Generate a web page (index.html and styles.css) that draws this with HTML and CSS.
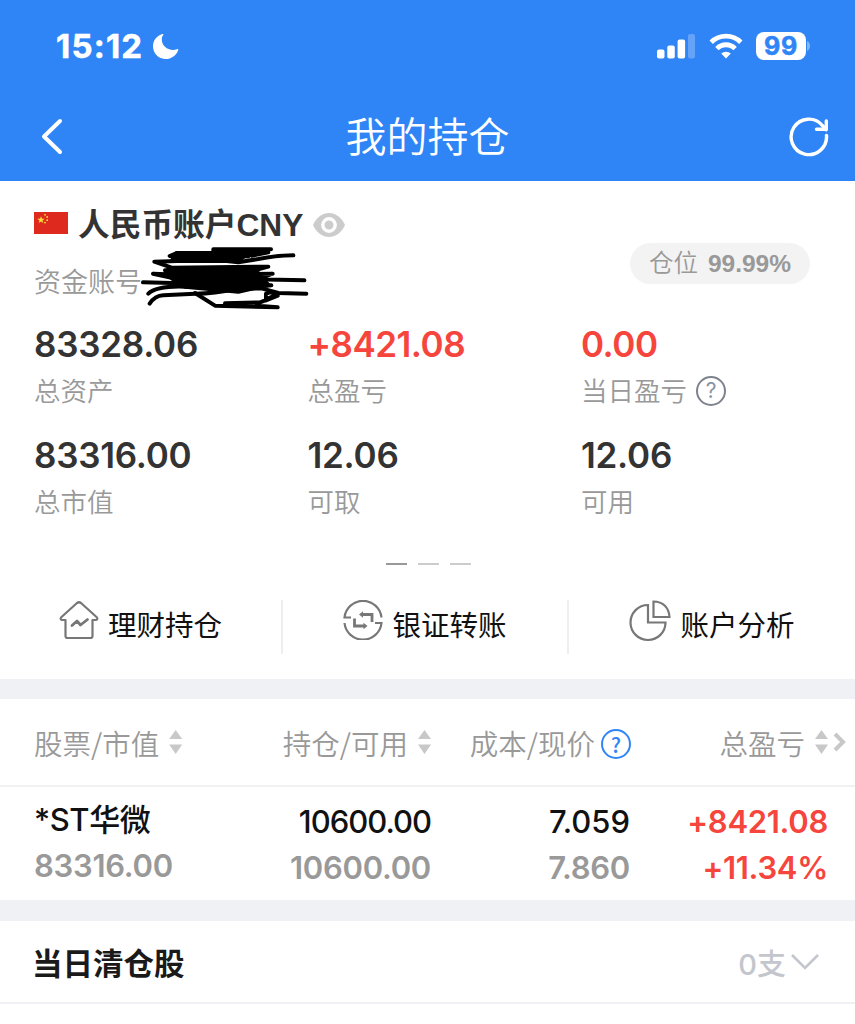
FILE: index.html
```
<!DOCTYPE html>
<html lang="zh-CN">
<head>
    <meta charset="UTF-8">
    <meta name="viewport" content="width=device-width, initial-scale=1.0">
    <title>我的持仓</title>
    <link rel="stylesheet" href="styles.css">
</head>
<body>

    <!-- Header -->
    <header>
        <div class="status-bar">
            <span class="time">15:12</span>
            <svg class="moon" width="27" height="27" viewBox="0 0 27 27"><path d="M10.500 1C5 2.500 1 7.200 1 13.200C1 20.400 6.600 26 13.800 26C19.500 26 24.500 22.300 26.200 17.200C26.500 16.300 25.800 15.900 25 16.200C18 18.800 9.200 14 9.800 5.500C9.900 4.200 10.600 2.900 11.200 2C11.600 1.300 11.300 0.800 10.500 1Z" fill="#fff"/></svg>
            <svg class="signal" width="39" height="25" viewBox="0 0 39 25" fill="#fff">
                <rect x="0" y="15.500" width="7.500" height="9" rx="2"/>
                <rect x="10.300" y="11.500" width="7.500" height="13" rx="2"/>
                <rect x="20.600" y="5.500" width="7.500" height="19" rx="2"/>
                <rect x="31" y="0" width="7" height="24.500" rx="2" opacity="0.25"/>
            </svg>
            <svg class="wifi" width="34" height="26" viewBox="0 0 34 26" fill="none" stroke="#fff" stroke-width="4.800">
                <path d="M2.200 9.200A21 21 0 0 1 31.800 9.200"/>
                <path d="M7.900 15.600A12.700 12.700 0 0 1 26.100 15.600"/>
                <path d="M17 25.500L12.200 20.600A7 7 0 0 1 21.800 20.600Z" fill="#fff" stroke="none"/>
            </svg>
            <span class="battery">99</span>
            <svg class="battery-tip" width="4" height="10" viewBox="0 0 4 10"><path d="M0 0C4 1.500 4 8.500 0 10Z" fill="#fff" opacity="0.4"/></svg>
        </div>
        <nav>
            <svg width="24" height="38" viewBox="0 0 24 38" fill="none" stroke="#fff" stroke-width="4" stroke-linecap="round" stroke-linejoin="round"><path d="M20 3L4 18.500L20 34"/></svg>
            <h1>我的持仓</h1>
            <svg width="42" height="42" viewBox="0 0 42 42" fill="none" stroke="#fff" stroke-width="3.400" stroke-linecap="round" stroke-linejoin="round">
                <path d="M38.500 19.500A17.700 17.700 0 1 1 34.500 9.600L38 13.700"/>
                <path d="M38.300 5V13.200H28.500"/>
            </svg>
        </nav>
    </header>

    <main>
        <!-- Account summary -->
        <section class="account">
            <div class="account-top">
                <div>
                    <div class="account-name">
                        <svg class="flag" width="34" height="22" viewBox="0 0 34 22">
                            <rect width="34" height="22" fill="#de2a1e"/>
                            <g fill="#fbe03a"><path d="M7 4.200L8 6.800H10.700L8.500 8.400L9.300 11L7 9.400L4.700 11L5.500 8.400L3.300 6.800H6Z"/><circle cx="11" cy="2.800" r="0.900"/><circle cx="13.200" cy="5" r="0.900"/><circle cx="13.200" cy="8.200" r="0.900"/><circle cx="11" cy="10.600" r="0.900"/></g>
                        </svg>
                        <h2>人民币账户CNY</h2>
                        <svg width="32" height="24" viewBox="0 0 32 24">
                            <path d="M0 12C7-4 25-4 32 12C25 28 7 28 0 12Z" fill="#ccc"/>
                            <circle cx="16" cy="12" r="6.200" fill="none" stroke="#fff" stroke-width="3.400"/>
                        </svg>
                    </div>
                    <div class="account-number">
                        资金账号
                        <svg class="scribble" width="170" height="66.700" viewBox="15 20 510 200" fill="none" stroke="#000" stroke-width="12" stroke-linecap="round" stroke-linejoin="round">
                            <path d="M408 33H235V42L355 38L400 42L350 52L370 44L125 44L104 53L140 56L340 54"/>
                            <path d="M475 51Q420 52 370 62L310 72L240 64L58 70L110 88L400 85L350 98L90 96L110 110L413 106L380 118L54 106L110 118L508 126"/>
                            <path d="M24 132L110 134L409 141L340 148L150 145Q65 142 40 166"/>
                            <path d="M44 196Q60 172 85 171L180 166Q240 166 300 152L380 150L430 164L514 166"/>
                            <path d="M180 164L240 202L428 207L270 195L375 192L428 172L393 186V166L405 162L428 168L400 180"/>
                            <path d="M125 44H340L310 68H110ZM100 92H340L370 104L400 140L310 160L150 145L110 120Z" fill="#000"/>
                        </svg>
                    </div>
                </div>
                <span class="position-pill">仓位 <b>99.99%</b></span>
            </div>

            <div class="stats">
                <div><p class="value">83328.06</p><p class="label">总资产</p></div>
                <div><p class="value red">+8421.08</p><p class="label">总盈亏</p></div>
                <div><p class="value red">0.00</p><p class="label">当日盈亏 <span class="help">?</span></p></div>
                <div><p class="value">83316.00</p><p class="label">总市值</p></div>
                <div><p class="value">12.06</p><p class="label">可取</p></div>
                <div><p class="value">12.06</p><p class="label">可用</p></div>
            </div>

            <div class="pager"><i class="active"></i><i></i><i></i></div>
        </section>

        <!-- Shortcuts -->
        <section class="actions">
            <a>
                <svg width="40" height="40" viewBox="0 0 40 40" fill="none" stroke="#777" stroke-width="2.200" stroke-linejoin="round" stroke-linecap="round">
                    <path d="M6.500 20H3Q0.500 19 2.500 17L18 3Q20 1.500 22 3L37.500 17Q39.500 19 37 20H33.500V36Q33.500 38 31.500 38H8.500Q6.500 38 6.500 36Z"/>
                    <path d="M13 25.500L18 21L21.500 25L28.500 19.500" stroke-width="2.800"/>
                </svg>
                理财持仓
            </a>
            <a>
                <svg width="40" height="40" viewBox="0 0 40 40" fill="none" stroke="#777" stroke-width="2.200">
                    <path d="M8 17.500H1.500A18.600 18.600 0 0 1 38.500 17.500"/>
                    <path d="M32 23H38.500A18.600 18.600 0 0 1 1.500 23"/>
                    <path d="M11.500 18.500V26H21M29 22V14.500H19" stroke-width="2.800"/>
                    <path d="M20.500 22.800V29.200L24.500 26ZM20 11.300V17.700L16 14.500Z" fill="#777" stroke="none"/>
                </svg>
                银证转账
            </a>
            <a>
                <svg width="42" height="42" viewBox="0 0 42 42" fill="none" stroke="#777" stroke-width="2.200">
                    <path d="M19 5A17.500 17.500 0 1 0 36.500 22.500H19Z"/>
                    <path d="M24.500 1.500V17H40.500C40 7.500 34 1.500 24.500 1.500Z"/>
                </svg>
                账户分析
            </a>
        </section>

        <!-- Holdings -->
        <section class="holdings">
            <div class="row head">
                <span>股票/市值<i class="sort"></i></span>
                <span>持仓/可用<i class="sort"></i></span>
                <span>成本/现价<span class="help blue">?</span></span>
                <span class="last">总盈亏<i class="sort"></i><svg width="13" height="20" viewBox="0 0 13 20" fill="none" stroke="#c8c8c8" stroke-width="4"><path d="M2 2L10 10L2 18"/></svg></span>
            </div>
            <div class="row item">
                <div class="stock"><p>*ST华微</p><p class="sub">83316.00</p></div>
                <div class="amount"><p>10600.00</p><p class="sub">10600.00</p></div>
                <div><p>7.059</p><p class="sub">7.860</p></div>
                <div class="profit"><p>+8421.08</p><p>+11.34%</p></div>
            </div>
        </section>

        <!-- Closed today -->
        <section class="closed">
            <h3>当日清仓股</h3>
            <span>0支</span>
            <svg width="30" height="18" viewBox="0 0 30 18" fill="none" stroke="#c3c6cd" stroke-width="2.600"><path d="M2 2L15 15L28 2"/></svg>
        </section>
    </main>

</body>
</html>
```
FILE: styles.css
```
/* Basic Reset */
* {
    margin: 0;
    padding: 0;
    box-sizing: border-box;
}

body {
    font-family: Inter, "Noto Sans CJK SC", sans-serif;
    background-color: #fff;
    color: #333;
}

svg {
    display: block;
    flex-shrink: 0;
}

/* Header */
header {
    height: 181px;
    background-color: #3085f6;
    color: #fff;
}

.status-bar {
    display: flex;
    align-items: center;
    height: 92px;
    padding: 0 44px 0 56px;
}

.time {
    font-size: 33px;
    font-weight: 700;
    letter-spacing: 1.2px;
    -webkit-text-stroke: 0.5px #fff;
}

.moon {
    margin-left: 9px;
}

.signal {
    margin-left: auto;
}

.wifi {
    margin-left: 13px;
}

.battery {
    width: 50px;
    height: 28px;
    margin-left: 13px;
    border-radius: 8px;
    background-color: #fff;
    color: #3085f6;
    font-size: 25px;
    font-weight: 700;
    line-height: 29px;
    letter-spacing: 0.8px;
    text-align: center;
    -webkit-text-stroke: 0.6px #3085f6;
}

.battery-tip {
    margin-left: 1px;
}

nav {
    display: flex;
    align-items: center;
    justify-content: space-between;
    height: 89px;
    padding: 0 25px 0 40px;
}

nav h1 {
    font-size: 41px;
    font-weight: 350;
    line-height: 60px;
    margin-left: 3px;
}

/* Account Summary */
.account {
    height: 419px;
    padding: 22px 0 0 34px;
}

.account-top {
    display: flex;
    justify-content: space-between;
    height: 121px;
    padding-right: 45px;
}

.account-name {
    display: flex;
    align-items: center;
    height: 44px;
}

.flag {
    margin-top: -4px;
}

.account-name h2 {
    margin: 0 10px;
    font-family: "Liberation Sans", "Noto Sans CJK SC", sans-serif;
    font-size: 31.7px;
    font-weight: 600;
    line-height: 46px;
}

.account-number {
    position: relative;
    color: #999;
    font-size: 27px;
    font-weight: 350;
    line-height: 71px;
}

.scribble {
    position: absolute;
    left: 106px;
    top: -2px;
}

.position-pill {
    height: 41px;
    margin-top: 40px;
    padding: 0 19px;
    border-radius: 21px;
    background-color: #f3f3f3;
    color: #999;
    font-family: "Liberation Sans", "Noto Sans CJK SC", sans-serif;
    font-size: 24.5px;
    font-weight: 350;
    line-height: 42px;
}

.position-pill b {
    margin-left: 3px;
    font-weight: 700;
}

.stats {
    display: grid;
    grid-template-columns: repeat(3, 273.5px);
    row-gap: 19px;
}

.value {
    font-size: 35px;
    font-weight: 600;
    line-height: 41px;
    letter-spacing: -0.25px;
}

.red {
    color: #f5453d;
    letter-spacing: -0.5px;
}

.label {
    display: flex;
    align-items: center;
    height: 50px;
    padding-bottom: 2px;
    margin-bottom: 1px;
    color: #999;
    font-size: 26.5px;
    font-weight: 350;
}

.help {
    width: 30px;
    height: 30px;
    margin: 4px 0 0 9px;
    border: 2px solid #7d828c;
    border-radius: 50%;
    color: #8a93a3;
    font-size: 21px;
    font-weight: 400;
    line-height: 26px;
    text-align: center;
}

.pager {
    display: flex;
    gap: 11px;
    margin: 36px 0 0 352px;
}

.pager i {
    width: 21px;
    height: 2px;
    background-color: #ccc;
}

.pager .active {
    background-color: #999;
}

/* Shortcuts */
.actions {
    display: grid;
    grid-template-columns: 283px 286px 286px;
    height: 99px;
    border-bottom: 20px solid #f0f1f4;
}

.actions a {
    display: flex;
    justify-content: center;
    gap: 9px;
    height: 54px;
    border-right: 2px solid #eee;
    color: #111;
    font-size: 28.5px;
    line-height: 51px;
}

.actions a:last-child {
    border-right: none;
}

/* Holdings Table */
.holdings {
    border-bottom: 21px solid #f0f1f4;
}

.row {
    display: grid;
    grid-template-columns: 200px 197px 199px 198px;
    padding-left: 34px;
    text-align: right;
}

.head {
    height: 88px;
    border-bottom: 2px solid #f0f1f3;
    color: #999;
    font-family: "Noto Sans CJK SC", sans-serif;
    font-size: 28.5px;
    font-weight: 350;
}

.head > span {
    display: flex;
    align-items: center;
    justify-content: flex-end;
}

.head > span:first-child {
    justify-content: flex-start;
}

.head .last {
    margin-right: -18px;
}

.sort {
    width: 13px;
    height: 24px;
    margin-left: 10px;
    background-color: #c8c8c8;
    clip-path: polygon(50% 0, 100% 38%, 0 38%, 0 60%, 100% 60%, 50% 100%, 0 60%, 0 38%);
}

.last svg {
    margin-left: 5px;
}

.help.blue {
    margin: 3px -1px 0 6px;
    border-color: #3085f6;
    color: #3085f6;
    font-weight: 500;
}

.item {
    height: 113px;
    padding-top: 12px;
    color: #111;
    font-size: 31px;
    font-weight: 500;
    line-height: 46px;
}

.stock {
    margin-top: -2px;
    text-align: left;
}

.stock p:first-child {
    letter-spacing: -0.4px;
}

.sub {
    color: #999;
    font-weight: 600;
    letter-spacing: -0.3px;
}

.amount p:first-child {
    letter-spacing: -1px;
}

.profit {
    color: #f5453d;
    font-weight: 600;
    letter-spacing: -0.3px;
}

/* Closed Today */
.closed {
    display: flex;
    align-items: center;
    height: 83px;
    padding: 0 35px 0 32px;
    border-bottom: 2px solid #f0f1f4;
}

.closed h3 {
    color: #1a1a1a;
    font-size: 30.5px;
    font-weight: 700;
}

.closed span {
    margin: 0 4px 0 auto;
    color: #c3c6cd;
    font-size: 29px;
    font-weight: 500;
}
```
